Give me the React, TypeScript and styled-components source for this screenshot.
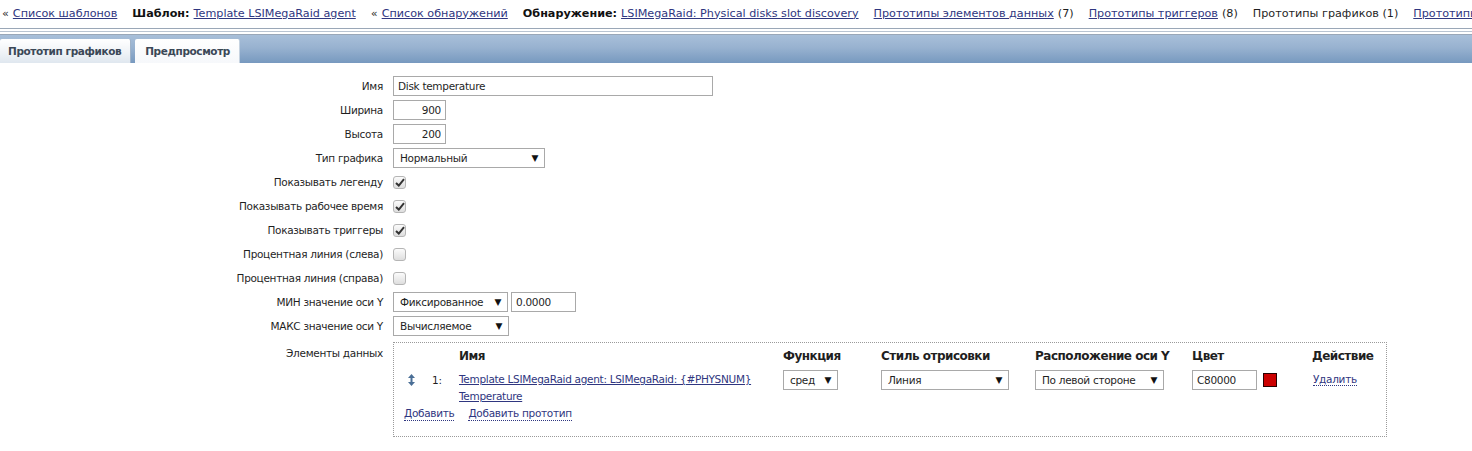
import React from "react";
import styled, { createGlobalStyle } from "styled-components";

const Global = createGlobalStyle`
  html, body { margin: 0; padding: 0; background: #fff; }
  body { font-family: "DejaVu Sans", Verdana, sans-serif; color: #1f1f1f; }
  * { box-sizing: border-box; }
`;

const Page = styled.div`
  width: 1472px;
  height: 451px;
  overflow: hidden;
  background: #fff;
`;

/* ---------- breadcrumb / header links ---------- */
const TopBar = styled.div`
  height: 28px;
  display: flex;
  align-items: center;
  gap: 15px;
  padding: 0 0 2px 2px;
  font-size: 11.2px;
  white-space: nowrap;
  overflow: hidden;
`;

const Crumb = styled.span`
  display: inline-flex;
  gap: 4px;
  color: #1f1f1f;
`;

const Strong = styled.b`
  font-weight: bold;
  color: #111;
`;

const Link = styled.a`
  color: #2f3680;
  text-decoration: underline;
  cursor: pointer;
`;

/* ---------- tab strip ---------- */
const Rules = styled.div`
  height: 7px;
  border-top: 1px solid #9aa7b7;
  border-bottom: 1px solid #9aa7b7;
  &::after {
    content: "";
    display: block;
    margin-top: 2px;
    height: 1px;
    background: #b9c4d1;
  }
`;

const TabBar = styled.div`
  height: 28px;
  display: flex;
  align-items: flex-end;
  gap: 4px;
  background: linear-gradient(#a8bfd9 0%, #98b2d0 45%, #7799bf 100%);
`;

const Tab = styled.div<{ $active?: boolean }>`
  height: 24px;
  display: flex;
  align-items: center;
  padding: 0 9px 0 ${(p) => (p.$active ? 8 : 10)}px;
  font-size: 10.5px;
  letter-spacing: -0.4px;
  font-weight: bold;
  color: #3b4857;
  border-radius: 2px 2px 0 0;
  background: ${(p) =>
    p.$active
      ? "linear-gradient(#ffffff 0%, #eef2f6 60%, #dfe7ef 100%)"
      : "linear-gradient(#ffffff 0%, #f6f8fb 100%)"};
  border-right: 1px solid ${(p) => (p.$active ? "#9fb2c8" : "#c5d2e0")};
`;

/* ---------- form ---------- */
const Form = styled.div`
  display: grid;
  grid-template-columns: 383px 1fr;
  column-gap: 10px;
  row-gap: 4px;
  padding-top: 13px;
  font-size: 10.5px;
`;

const Label = styled.div<{ $top?: boolean }>`
  text-align: right;
  display: flex;
  justify-content: flex-end;
  align-items: ${(p) => (p.$top ? "flex-start" : "center")};
  padding-top: ${(p) => (p.$top ? 7 : 0)}px;
  min-height: 20px;
  letter-spacing: -0.3px;
  color: #1f1f1f;
`;

const Field = styled.div`
  display: flex;
  align-items: center;
  gap: 3px;
  min-height: 20px;
`;

const TextInput = styled.input<{ $w: number; $right?: boolean }>`
  width: ${(p) => p.$w}px;
  height: 20px;
  border: 1px solid #a9a9a9;
  padding: 0 4px;
  font-family: "DejaVu Sans", Verdana, sans-serif;
  font-size: 10.5px;
  letter-spacing: -0.3px;
  color: #1f1f1f;
  text-align: ${(p) => (p.$right ? "right" : "left")};
  outline: none;
  background: #fff;
`;

const SelectBox = styled.div<{ $w: number }>`
  width: ${(p) => p.$w}px;
  height: 20px;
  border: 1px solid #a9a9a9;
  display: flex;
  align-items: center;
  justify-content: space-between;
  padding: 0 6px 0 6px;
  font-size: 10.5px;
  letter-spacing: -0.3px;
  color: #1f1f1f;
  background: #fff;
  white-space: nowrap;
`;

const Arrow = styled.span`
  font-size: 9px;
  color: #111;
`;

const Check = styled.span`
  width: 13px;
  height: 13px;
  border: 1px solid #b5b5b5;
  border-radius: 3px;
  background: linear-gradient(#fbfbfb, #dedede);
  display: inline-flex;
  align-items: center;
  justify-content: center;
`;

/* ---------- data items block ---------- */
const ItemsBox = styled.div`
  width: 994px;
  height: 95px;
  border: 1px dotted #9a9a9a;
  padding: 6px 0 0 10px;
  margin-top: 2px;
`;

const ItemsGrid = styled.div`
  display: grid;
  grid-template-columns: 55px 324px 98px 154px 157px 120px 1fr;
  align-items: center;
`;

const Head = styled.div`
  font-size: 12px;
  font-weight: bold;
  letter-spacing: -0.5px;
  height: 16px;
  color: #1f1f1f;
`;

const RowCell = styled.div<{ $center?: boolean }>`
  display: flex;
  align-items: ${(p) => (p.$center ? "center" : "flex-start")};
  padding-top: 5px;
  font-size: 10.5px;
  letter-spacing: -0.3px;
  align-self: start;
  gap: 6px;
`;

const Handle = styled.span`
  width: 22px;
  padding-left: 4px;
  padding-top: 4px;
`;

const Num = styled.span`
  padding-top: 4px;
`;

const NameLink = styled(Link)`
  display: block;
  line-height: 17px;
  padding-top: 1px;
  font-size: 10.5px;
  width: 310px;
`;

const Swatch = styled.span`
  width: 14px;
  height: 14px;
  background: #cc0000;
  border: 1px solid #2a0000;
`;

const DotLink = styled.a`
  color: #2f3680;
  text-decoration: none;
  border-bottom: 1px dotted #2f3680;
  font-size: 10.5px;
  letter-spacing: -0.3px;
  line-height: 13px;
  cursor: pointer;
`;

const ActionCell = styled.div`
  align-self: start;
  padding-top: 8px;
  padding-left: 1px;
`;

const AddRow = styled.div`
  display: flex;
  gap: 14px;
  padding-top: 2px;
`;

const Tick = () => (
  <svg width="10" height="9" viewBox="0 0 10 9">
    <path d="M1 5 L3.8 7.6 L9 1.2" fill="none" stroke="#333" strokeWidth="2" />
  </svg>
);

const UpDown = () => (
  <svg width="7" height="12" viewBox="0 0 7 12">
    <path d="M3.5 0 L7 4 L0 4 Z M3.5 12 L7 8 L0 8 Z" fill="#4a6e96" />
    <rect x="2.5" y="3" width="2" height="6" fill="#4a6e96" />
  </svg>
);

const Select = ({ w, children }: { w: number; children: React.ReactNode }) => (
  <SelectBox $w={w}>
    <span>{children}</span>
    <Arrow>▼</Arrow>
  </SelectBox>
);

export default function App() {
  return (
    <Page>
      <Global />
      <TopBar>
        <Crumb>
          «<Link>Список шаблонов</Link>
        </Crumb>
        <Crumb>
          <Strong>Шаблон:</Strong>
          <Link>Template LSIMegaRaid agent</Link>
        </Crumb>
        <Crumb>
          «<Link>Список обнаружений</Link>
        </Crumb>
        <Crumb>
          <Strong>Обнаружение:</Strong>
          <Link>LSIMegaRaid: Physical disks slot discovery</Link>
        </Crumb>
        <Crumb>
          <Link>Прототипы элементов данных</Link> (7)
        </Crumb>
        <Crumb>
          <Link>Прототипы триггеров</Link> (8)
        </Crumb>
        <Crumb>Прототипы графиков (1)</Crumb>
        <Crumb>
          <Link>Прототипы узлов сети</Link>
        </Crumb>
      </TopBar>
      <Rules />
      <TabBar>
        <Tab $active>Прототип графиков</Tab>
        <Tab>Предпросмотр</Tab>
      </TabBar>

      <Form>
        <Label>Имя</Label>
        <Field>
          <TextInput $w={320} readOnly defaultValue="Disk temperature" />
        </Field>

        <Label>Ширина</Label>
        <Field>
          <TextInput $w={53} $right readOnly defaultValue="900" />
        </Field>

        <Label>Высота</Label>
        <Field>
          <TextInput $w={53} $right readOnly defaultValue="200" />
        </Field>

        <Label>Тип графика</Label>
        <Field>
          <Select w={152}>Нормальный</Select>
        </Field>

        <Label>Показывать легенду</Label>
        <Field>
          <Check>
            <Tick />
          </Check>
        </Field>

        <Label>Показывать рабочее время</Label>
        <Field>
          <Check>
            <Tick />
          </Check>
        </Field>

        <Label>Показывать триггеры</Label>
        <Field>
          <Check>
            <Tick />
          </Check>
        </Field>

        <Label>Процентная линия (слева)</Label>
        <Field>
          <Check />
        </Field>

        <Label>Процентная линия (справа)</Label>
        <Field>
          <Check />
        </Field>

        <Label>МИН значение оси Y</Label>
        <Field>
          <Select w={115}>Фиксированное</Select>
          <TextInput $w={65} readOnly defaultValue="0.0000" />
        </Field>

        <Label>МАКС значение оси Y</Label>
        <Field>
          <Select w={116}>Вычисляемое</Select>
        </Field>

        <Label $top>Элементы данных</Label>
        <Field>
          <ItemsBox>
            <ItemsGrid>
              <Head />
              <Head>Имя</Head>
              <Head>Функция</Head>
              <Head>Стиль отрисовки</Head>
              <Head>Расположение оси Y</Head>
              <Head>Цвет</Head>
              <Head>Действие</Head>

              <RowCell>
                <Handle>
                  <UpDown />
                </Handle>
                <Num>1:</Num>
              </RowCell>
              <RowCell>
                <NameLink>
                  Template LSIMegaRaid agent: LSIMegaRaid: {"{#PHYSNUM}"} Temperature
                </NameLink>
              </RowCell>
              <RowCell>
                <Select w={55}>сред</Select>
              </RowCell>
              <RowCell>
                <Select w={128}>Линия</Select>
              </RowCell>
              <RowCell>
                <Select w={129}>По левой стороне</Select>
              </RowCell>
              <RowCell $center>
                <TextInput $w={65} readOnly defaultValue="C80000" />
                <Swatch />
              </RowCell>
              <ActionCell>
                <DotLink>Удалить</DotLink>
              </ActionCell>
            </ItemsGrid>
            <AddRow>
              <DotLink>Добавить</DotLink>
              <DotLink>Добавить прототип</DotLink>
            </AddRow>
          </ItemsBox>
        </Field>
      </Form>
    </Page>
  );
}
